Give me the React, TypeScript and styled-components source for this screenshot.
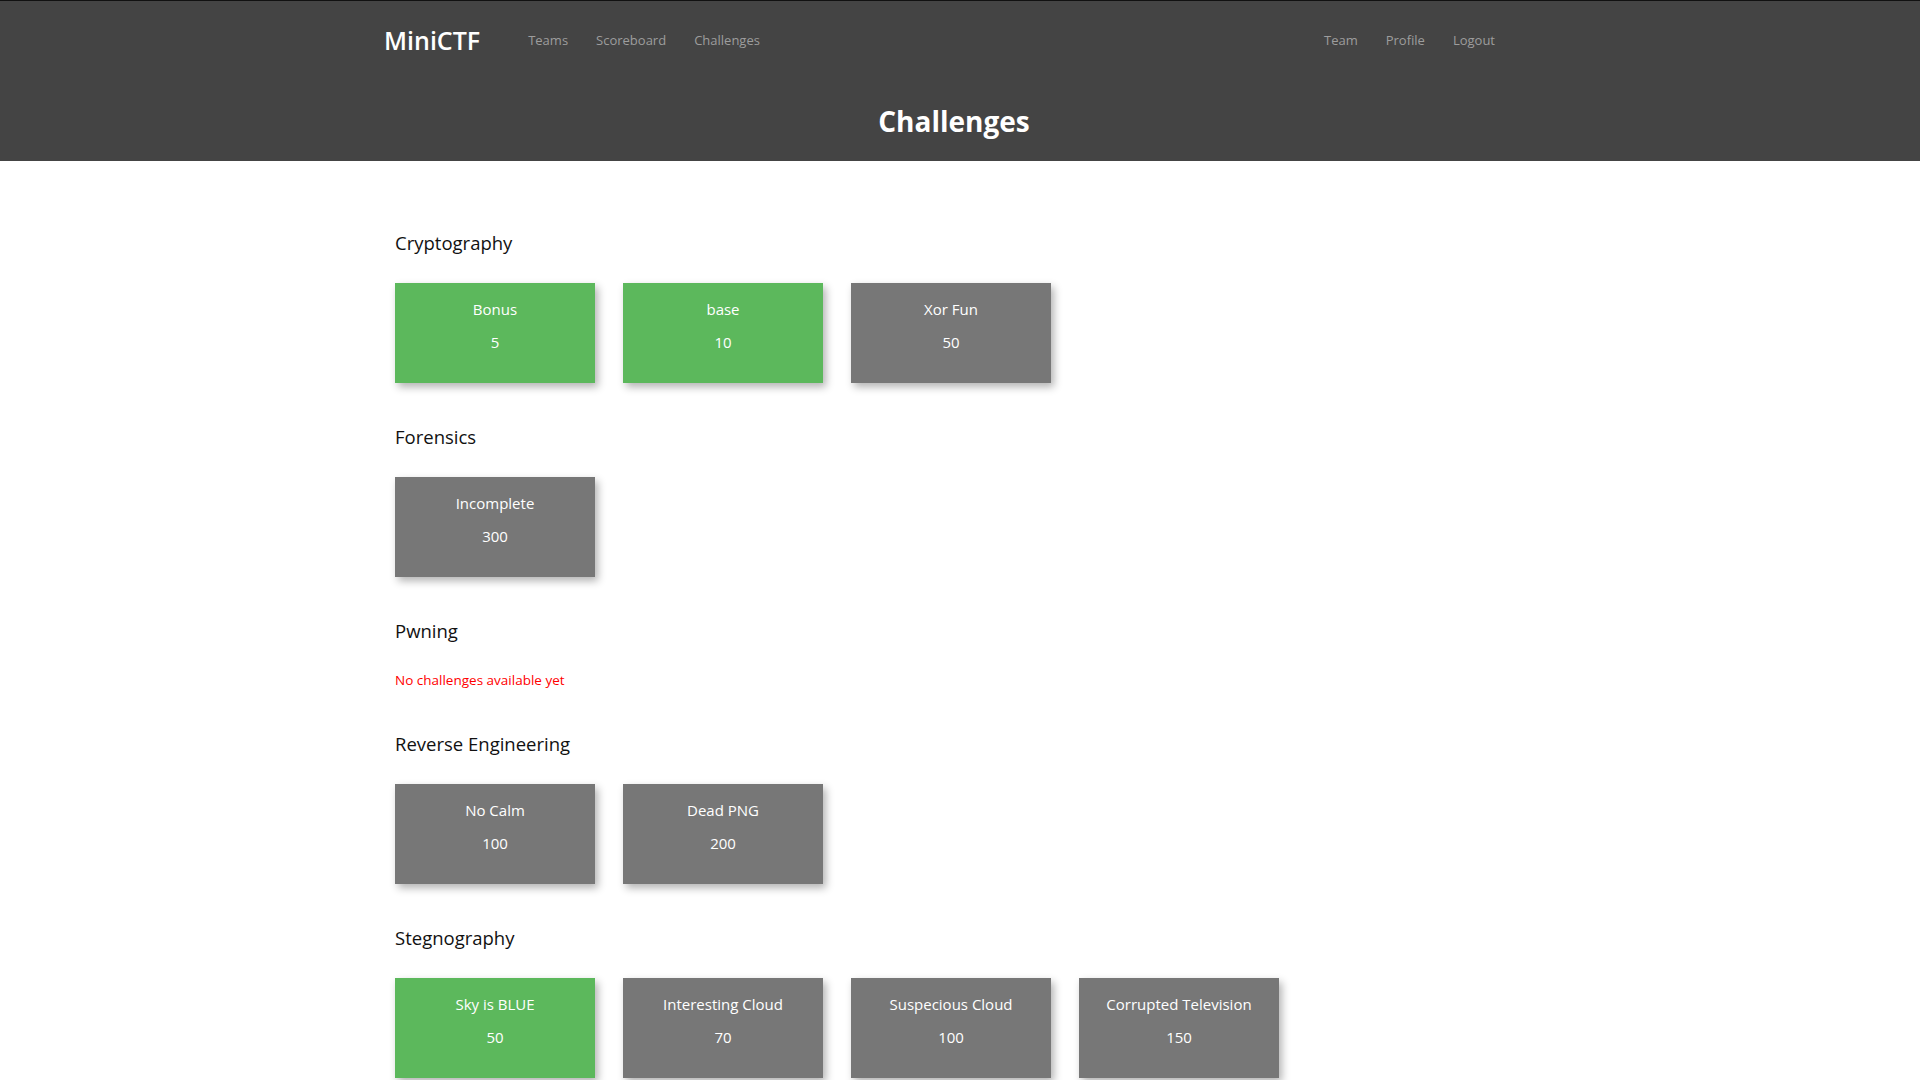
import React, { FC } from 'react';
import styled, { createGlobalStyle } from 'styled-components';

interface Challenge {
  name: string;
  points: number;
  solved?: boolean;
}

interface Category {
  title: string;
  challenges: Challenge[];
}

const categories: Category[] = [
  {
    title: 'Cryptography',
    challenges: [
      { name: 'Bonus', points: 5, solved: true },
      { name: 'base', points: 10, solved: true },
      { name: 'Xor Fun', points: 50 },
    ],
  },
  {
    title: 'Forensics',
    challenges: [{ name: 'Incomplete', points: 300 }],
  },
  { title: 'Pwning', challenges: [] },
  {
    title: 'Reverse Engineering',
    challenges: [
      { name: 'No Calm', points: 100 },
      { name: 'Dead PNG', points: 200 },
    ],
  },
  {
    title: 'Stegnography',
    challenges: [
      { name: 'Sky is BLUE', points: 50, solved: true },
      { name: 'Interesting Cloud', points: 70 },
      { name: 'Suspecious Cloud', points: 100 },
      { name: 'Corrupted Television', points: 150 },
    ],
  },
];

const GlobalStyle = createGlobalStyle`
  html, body {
    margin: 0;
    padding: 0;
    background: #fff;
  }
  body {
    font-family: "Open Sans", "Noto Sans", sans-serif;
    color: #222;
  }
`;

const App: FC = () => (
  <>
    <GlobalStyle />
    <Header>
      <Navbar>
        <Brand>MiniCTF</Brand>
        <NavList>
          <NavLink>Teams</NavLink>
          <NavLink>Scoreboard</NavLink>
          <NavLink>Challenges</NavLink>
        </NavList>
        <Spacer />
        <NavList>
          <NavLink>Team</NavLink>
          <NavLink>Profile</NavLink>
          <NavLink>Logout</NavLink>
        </NavList>
      </Navbar>
      <PageTitle>Challenges</PageTitle>
    </Header>
    <Main>
      {categories.map((cat) => (
        <Section key={cat.title}>
          <SectionTitle>{cat.title}</SectionTitle>
          {cat.challenges.length === 0 ? (
            <Empty>No challenges available yet</Empty>
          ) : (
            <CardRow>
              {cat.challenges.map((ch) => (
                <Card key={ch.name} solved={!!ch.solved}>
                  <CardName>{ch.name}</CardName>
                  <CardPoints>{ch.points}</CardPoints>
                </Card>
              ))}
            </CardRow>
          )}
        </Section>
      ))}
    </Main>
  </>
);

const Header = styled.header`
  background: #444444;
  border-top: 1px solid #111;
  height: 160px;
`;

const Navbar = styled.nav`
  width: 1125px;
  margin: 0 0 0 384px;
  height: 78px;
  display: flex;
  align-items: center;
`;

const Brand = styled.div`
  color: #fff;
  font-size: 25px;
  font-weight: 600;
  margin-right: 34px;
`;

const NavList = styled.ul`
  list-style: none;
  margin: 0;
  padding: 0;
  display: flex;
`;

const NavLink = styled.li`
  color: #9d9d9d;
  font-size: 13px;
  padding: 0 14px;
`;

const Spacer = styled.div`
  flex: 1;
`;

const PageTitle = styled.h1`
  margin: 24px 0 0;
  padding-right: 12px;
  text-align: center;
  color: #fff;
  font-size: 28px;
  font-weight: 700;
  line-height: 36px;
`;

const Main = styled.main`
  width: 1130px;
  margin: 0 auto;
  padding: 70px 0 60px;
  display: flex;
  flex-direction: column;
  gap: 42px;
`;

const Section = styled.section`
  display: flex;
  flex-direction: column;
`;

const SectionTitle = styled.h4`
  margin: 0 0 28px;
  font-size: 18.5px;
  font-weight: 400;
  line-height: 24px;
  color: #111;
`;

const Empty = styled.p`
  margin: -1px 0 0;
  color: #ff0000;
  font-size: 13.5px;
  line-height: 20px;
`;

const CardRow = styled.div`
  display: flex;
  gap: 28px;
`;

const Card = styled.div<{ solved: boolean }>`
  width: 200px;
  height: 100px;
  box-sizing: border-box;
  padding-top: 15px;
  background: ${(p) => (p.solved ? '#5cb85c' : '#777777')};
  color: #fff;
  text-align: center;
  box-shadow: 3px 4px 8px rgba(0, 0, 0, 0.3);
`;

const CardName = styled.div`
  font-size: 15px;
  line-height: 22px;
`;

const CardPoints = styled.div`
  margin-top: 11px;
  font-size: 15px;
  line-height: 22px;
`;

export default App;
